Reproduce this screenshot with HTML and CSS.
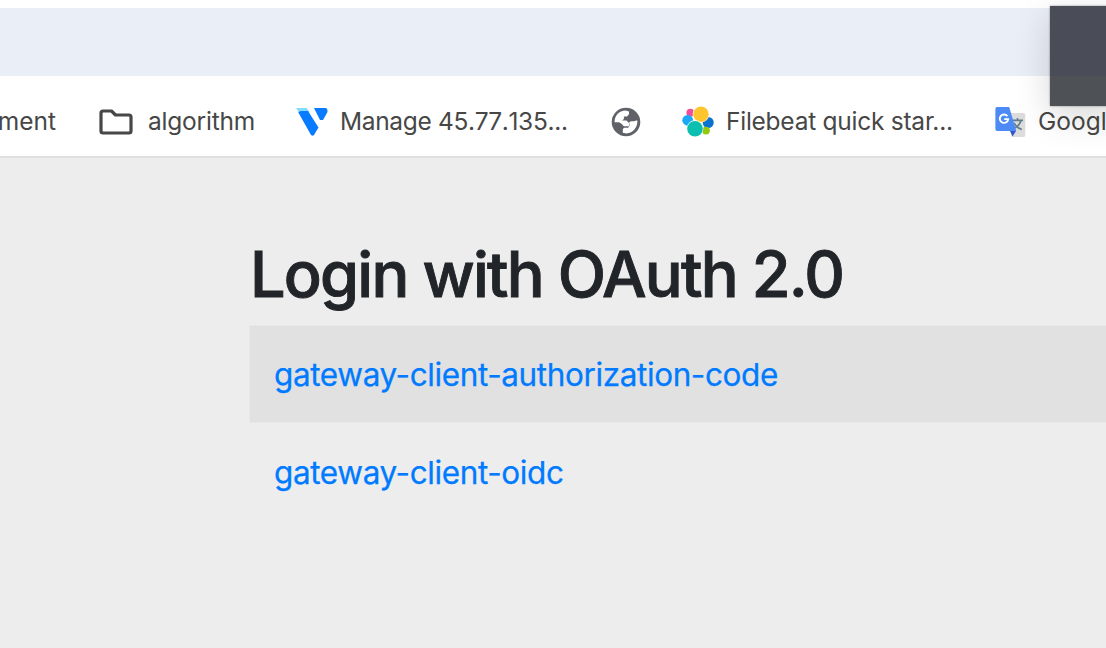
FILE: index.html
```html
<!DOCTYPE html>
<html lang="en">
<head>
<meta charset="utf-8">
<title>Login with OAuth 2.0</title>
<link rel="stylesheet" href="styles.css">
</head>
<body>
<div class="window">
  <div class="toolbar"></div>
  <nav class="bookmarks">
    <a class="bookmark clipped"><span class="label l-ment">ment</span></a>
    <a class="bookmark">
      <svg class="icon folder" width="34" height="26" viewBox="0 0 34 26"><path d="M4 2H12.5L16.5 6H30Q32 6 32 8V22Q32 24 30 24H4Q2 24 2 22V4Q2 2 4 2Z" fill="none" stroke="#474747" stroke-width="3.2" stroke-linejoin="round"/></svg>
      <span class="label l-algo">algorithm</span>
    </a>
    <a class="bookmark">
      <svg class="icon vultr" width="32" height="28" viewBox="0 0 32 28"><path d="M0 0H10.5L14 4.5H3Z" fill="#83dcff"/><path d="M2.2 4.2Q4 3 6 3H12L22.5 19.5L18 27Q16.5 28.5 15 27Z" fill="#087bff"/><path d="M18 0H30Q32 1 31.5 4L27 12H24Z" fill="#087bff"/></svg>
      <span class="label l-manage">Manage 45.77.135...</span>
    </a>
    <a class="bookmark">
      <svg class="icon globe" width="30" height="30" viewBox="0 0 30 30"><circle cx="15" cy="15" r="14.3" fill="#5f6368"/><path d="M3.6 15.2C3.2 9 8.2 3.6 14.5 3.5L18 4.5V7.2L16 9.4H12.9V11.9L11 13.5H15.5L18 16V19.2H12.8L10.8 17L8 15.2Z" fill="#fff"/><path d="M26.3 13.2C27 20 22 26 15.5 26.4L11.8 25.7V22L13.3 20.8H17.2L18.5 18.8L18.2 15.2L20 14.2H23Z" fill="#fff"/></svg>
    </a>
    <a class="bookmark">
      <svg class="icon elastic" width="32" height="32" viewBox="0 0 32 32"><circle cx="8.3" cy="6.7" r="3.9" fill="#f04e98"/><circle cx="5.7" cy="14.3" r="5.4" fill="#1ba9f5"/><circle cx="26.2" cy="16.5" r="5.5" fill="#0b72ce"/><circle cx="24" cy="24.6" r="3.9" fill="#93c90e"/><circle cx="19" cy="8.2" r="8.3" fill="#fff"/><circle cx="19" cy="8.2" r="7.7" fill="#fec52f"/><circle cx="13" cy="22.7" r="8.4" fill="#fff"/><circle cx="13" cy="22.7" r="7.8" fill="#0bbfb0"/></svg>
      <span class="label l-file">Filebeat quick star...</span>
    </a>
    <a class="bookmark">
      <svg class="icon translate" width="31" height="30" viewBox="0 0 31 30"><path d="M11 6H28.5Q30.3 6 30.3 8V28Q30.3 30 28.5 30H17Z" fill="#dcdcdc"/><g fill="none" stroke="#607d8b" stroke-width="1.6"><path d="M17 13.4H28M22.5 11V13.4M26 13.5Q24.5 19 18 22M19 16Q21.5 20.5 26.8 22.5"/></g><path d="M15 24H21L17.5 29.6Z" fill="#3455c8"/><path d="M2 0H14.2L21.3 24H2Q.4 24 .4 22V2Q.4 0 2 0Z" fill="#4c8bf5"/><path d="M12.4 9.2A4.2 4.2 0 1 0 13.2 12.1H9.2" fill="none" stroke="#fff" stroke-width="1.9"/></svg>
      <span class="label l-googl">Googl</span>
    </a>
  </nav>
  <div class="overlay"></div>
</div>
<main class="page">
  <h1 class="title"><span class="title-text">Login with OAuth 2.0</span></h1>
  <div class="clients">
    <div class="client striped"><a class="link l-code">gateway-client-authorization-code</a></div>
    <div class="client"><a class="link l-oidc">gateway-client-oidc</a></div>
  </div>
</main>
</body>
</html>
```
FILE: styles.css
```css
* { box-sizing: border-box; }
body {
  margin: 0;
  width: 1106px;
  height: 648px;
  overflow: hidden;
  background: #ededed;
  font-family: Inter, "Liberation Sans", sans-serif;
}
.window {
  position: relative;
  height: 158px;
  padding-top: 8px;
  background: #fff;
  border-bottom: 2px solid #e0e0e0;
  overflow: hidden;
}
.toolbar { height: 68px; background: #eaeef7; }
.bookmarks {
  display: grid;
  grid-template-columns: 99px 197px 315px 71px 313px 160px;
  height: 80px;
  padding-top: 12px;
  color: #474747;
  font-size: 24.5px;
}
.bookmark {
  display: flex;
  align-items: center;
  height: 68px;
  white-space: nowrap;
}
.label { margin-top: -2px; }
.clipped { width: 56px; justify-content: flex-end; overflow: hidden; }
.l-algo { letter-spacing: -.2px; }
.l-manage { font-kerning: none; letter-spacing: -.34px; }
.l-file { letter-spacing: -.25px; }
.icon { flex: none; display: block; }
.folder { margin-right: 15px; }
.vultr { margin-right: 12px; }
.elastic { margin-right: 12px; }
.translate { margin-right: 12px; }
.overlay {
  position: absolute;
  left: 1050px;
  top: 6px;
  width: 80px;
  height: 100px;
  background: linear-gradient(#4a4d57 0 70px, #4e5155 70px);
  box-shadow: 0 0 2px rgba(0, 0, 0, .4), 0 10px 36px rgba(0, 0, 0, .16);
}
.page { padding: 85px 0 0 250px; }
.title {
  margin: 0;
  height: 83px;
  line-height: 62px;
  font-size: 63px;
  font-weight: 500;
  letter-spacing: -1.8px;
  color: #212529;
  white-space: nowrap;
  -webkit-text-stroke: .9px #212529;
}
.client { height: 98px; padding: 0 24px; line-height: 98px; }
.striped { background: #e1e1e1; height: 96px; box-shadow: 0 0 0 1px #e6e9ec; margin-bottom: 2px; }
.link { font-size: 31.5px; letter-spacing: -.39px; color: #007bff; white-space: nowrap; -webkit-text-stroke: .25px #007bff; }
```
